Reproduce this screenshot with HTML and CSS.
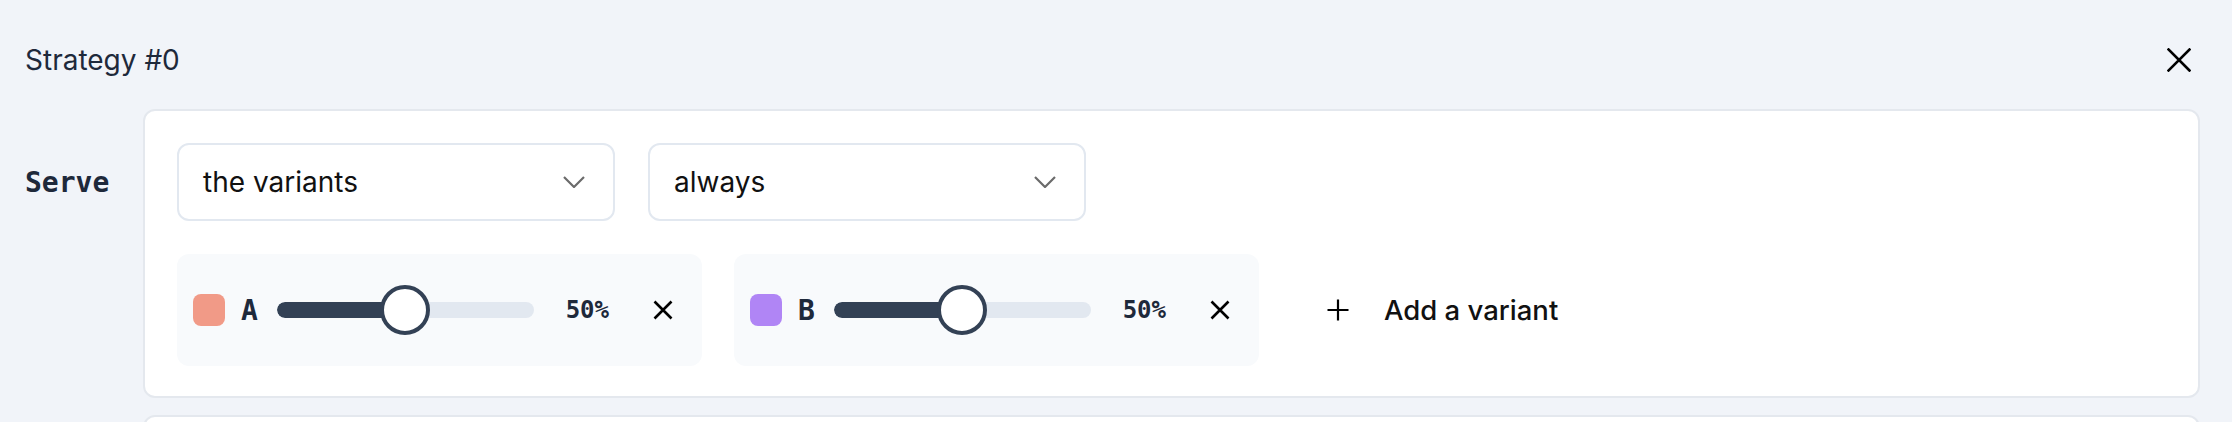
FILE: index.html
```html
<!DOCTYPE html>
<html lang="en">
<head>
<meta charset="utf-8">
<title>Strategy #0</title>
<link rel="stylesheet" href="styles.css">
</head>
<body>
<div class="page">
  <header class="strategy-head">
    <h2 class="strategy-title">Strategy #0</h2>
    <button class="icon-btn close-btn" aria-label="Remove strategy">
      <svg width="24" height="24" viewBox="0 0 24 24"><path d="M1.5 1.5 L22.5 22.5 M22.5 1.5 L1.5 22.5" stroke="#000" stroke-width="2.6" fill="none" stroke-linecap="square"/></svg>
    </button>
  </header>

  <div class="rule-row">
    <div class="rule-label">Serve</div>
    <div class="card">
      <div class="selects">
        <div class="select">
          <span class="select-value">the variants</span>
          <svg class="chevron" width="22" height="12" viewBox="0 0 22 12"><polyline points="1,1 11,11 21,1" fill="none" stroke="#6b6b6b" stroke-width="2.2"/></svg>
        </div>
        <div class="select">
          <span class="select-value">always</span>
          <svg class="chevron" width="22" height="12" viewBox="0 0 22 12"><polyline points="1,1 11,11 21,1" fill="none" stroke="#6b6b6b" stroke-width="2.2"/></svg>
        </div>
      </div>

      <div class="variants">
        <div class="variant">
          <span class="swatch swatch-a"></span>
          <span class="vname">A</span>
          <div class="slider">
            <div class="track"><div class="fill" style="width:50%"></div></div>
            <div class="thumb" style="left:50%"></div>
          </div>
          <span class="pct">50%</span>
          <button class="icon-btn remove-btn" aria-label="Remove variant A">
            <svg width="20" height="20" viewBox="0 0 20 20"><path d="M1.5 1.5 L18.5 18.5 M18.5 1.5 L1.5 18.5" stroke="#000" stroke-width="2.6" fill="none"/></svg>
          </button>
        </div>

        <div class="variant">
          <span class="swatch swatch-b"></span>
          <span class="vname">B</span>
          <div class="slider">
            <div class="track"><div class="fill" style="width:50%"></div></div>
            <div class="thumb" style="left:50%"></div>
          </div>
          <span class="pct">50%</span>
          <button class="icon-btn remove-btn" aria-label="Remove variant B">
            <svg width="20" height="20" viewBox="0 0 20 20"><path d="M1.5 1.5 L18.5 18.5 M18.5 1.5 L1.5 18.5" stroke="#000" stroke-width="2.6" fill="none"/></svg>
          </button>
        </div>

        <button class="add-variant">
          <svg width="22" height="22" viewBox="0 0 22 22"><path d="M11 0.5 V21.5 M0.5 11 H21.5" stroke="#000" stroke-width="2.2" fill="none"/></svg>
          <span>Add a variant</span>
        </button>
      </div>
    </div>
  </div>

  <div class="rule-row next-row">
    <div class="rule-label"></div>
    <div class="card card-next"></div>
  </div>
</div>
</body>
</html>
```

FILE: styles.css
```css
html, body {
  margin: 0;
  padding: 0;
  overflow: hidden;
}

body {
  background: #f1f4f9;
  font-family: "Inter", "Noto Sans", "Liberation Sans", sans-serif;
  color: #1e293b;
}

.page {
  padding: 0 32px 0 24px;
}

.strategy-head {
  display: flex;
  align-items: center;
  justify-content: space-between;
  height: 48px;
  margin-top: 36px;
  margin-bottom: 25px;
  padding-left: 1px;
  padding-right: 9px;
}

.strategy-title {
  margin: 0;
  font-size: 28px;
  font-weight: 400;
  color: #1e293b;
}

.icon-btn {
  background: none;
  border: 0;
  padding: 0;
  margin: 0;
  display: flex;
  align-items: center;
  justify-content: center;
  cursor: pointer;
}

.rule-row {
  display: flex;
  align-items: flex-start;
}

.rule-label {
  width: 119px;
  flex: none;
  box-sizing: border-box;
  height: 112px;
  padding-top: 34px;
  padding-left: 1px;
  display: flex;
  align-items: center;
  font-family: "DejaVu Sans Mono", "Liberation Mono", monospace;
  font-weight: 700;
  font-size: 28px;
  color: #1e293b;
}

.card {
  flex: 1;
  background: #fff;
  border: 2px solid #e4e8ee;
  border-radius: 12px;
  padding: 32px 32px 30px 32px;
  display: flex;
  flex-direction: column;
  gap: 33px;
}

.selects {
  display: flex;
  gap: 33px;
}

.select {
  box-sizing: border-box;
  width: 438px;
  height: 78px;
  border: 2px solid #e2e8f0;
  border-radius: 12px;
  background: #fff;
  display: flex;
  align-items: center;
  justify-content: space-between;
  padding: 0 28px 0 24px;
}

.select-value {
  font-size: 28px;
  color: #111;
}

.chevron {
  flex: none;
}

.variants {
  display: flex;
  align-items: center;
  gap: 32px;
}

.variant {
  box-sizing: border-box;
  width: 525px;
  height: 112px;
  background: #f8fafc;
  border-radius: 12px;
  display: flex;
  align-items: center;
  padding: 0 29px 0 16px;
}

.swatch {
  width: 32px;
  height: 32px;
  border-radius: 8px;
  flex: none;
}

.swatch-a { background: #f19a87; }
.swatch-b { background: #b085f5; }

.vname {
  width: 20px;
  margin-left: 16px;
  font-family: "DejaVu Sans Mono", "Liberation Mono", monospace;
  font-weight: 700;
  font-size: 28px;
  color: #1e293b;
}

.slider {
  position: relative;
  width: 257px;
  height: 52px;
  margin-left: 16px;
  flex: none;
  display: flex;
  align-items: center;
}

.track {
  width: 100%;
  height: 16px;
  border-radius: 8px;
  background: #e2e8f0;
  overflow: hidden;
}

.fill {
  height: 100%;
  background: #334155;
  border-radius: 8px 0 0 8px;
}

.thumb {
  position: absolute;
  top: 1px;
  width: 50px;
  height: 50px;
  box-sizing: border-box;
  border: 4px solid #334155;
  border-radius: 50%;
  background: #fff;
  transform: translateX(-50%);
}

.pct {
  margin-left: 32px;
  font-family: "DejaVu Sans Mono", "Liberation Mono", monospace;
  font-weight: 700;
  font-size: 24px;
  color: #1e293b;
}

.remove-btn {
  margin-left: 44px;
}

.add-variant {
  background: none;
  border: 0;
  margin: 0;
  padding: 0 0 0 36px;
  display: flex;
  align-items: center;
  gap: 35px;
  font-family: "Inter", "Noto Sans", sans-serif;
  font-size: 27.5px;
  font-weight: 500;
  color: #111;
  cursor: pointer;
}

.next-row {
  margin-top: 17px;
}

.card-next {
  height: 200px;
  padding: 0;
}
```
